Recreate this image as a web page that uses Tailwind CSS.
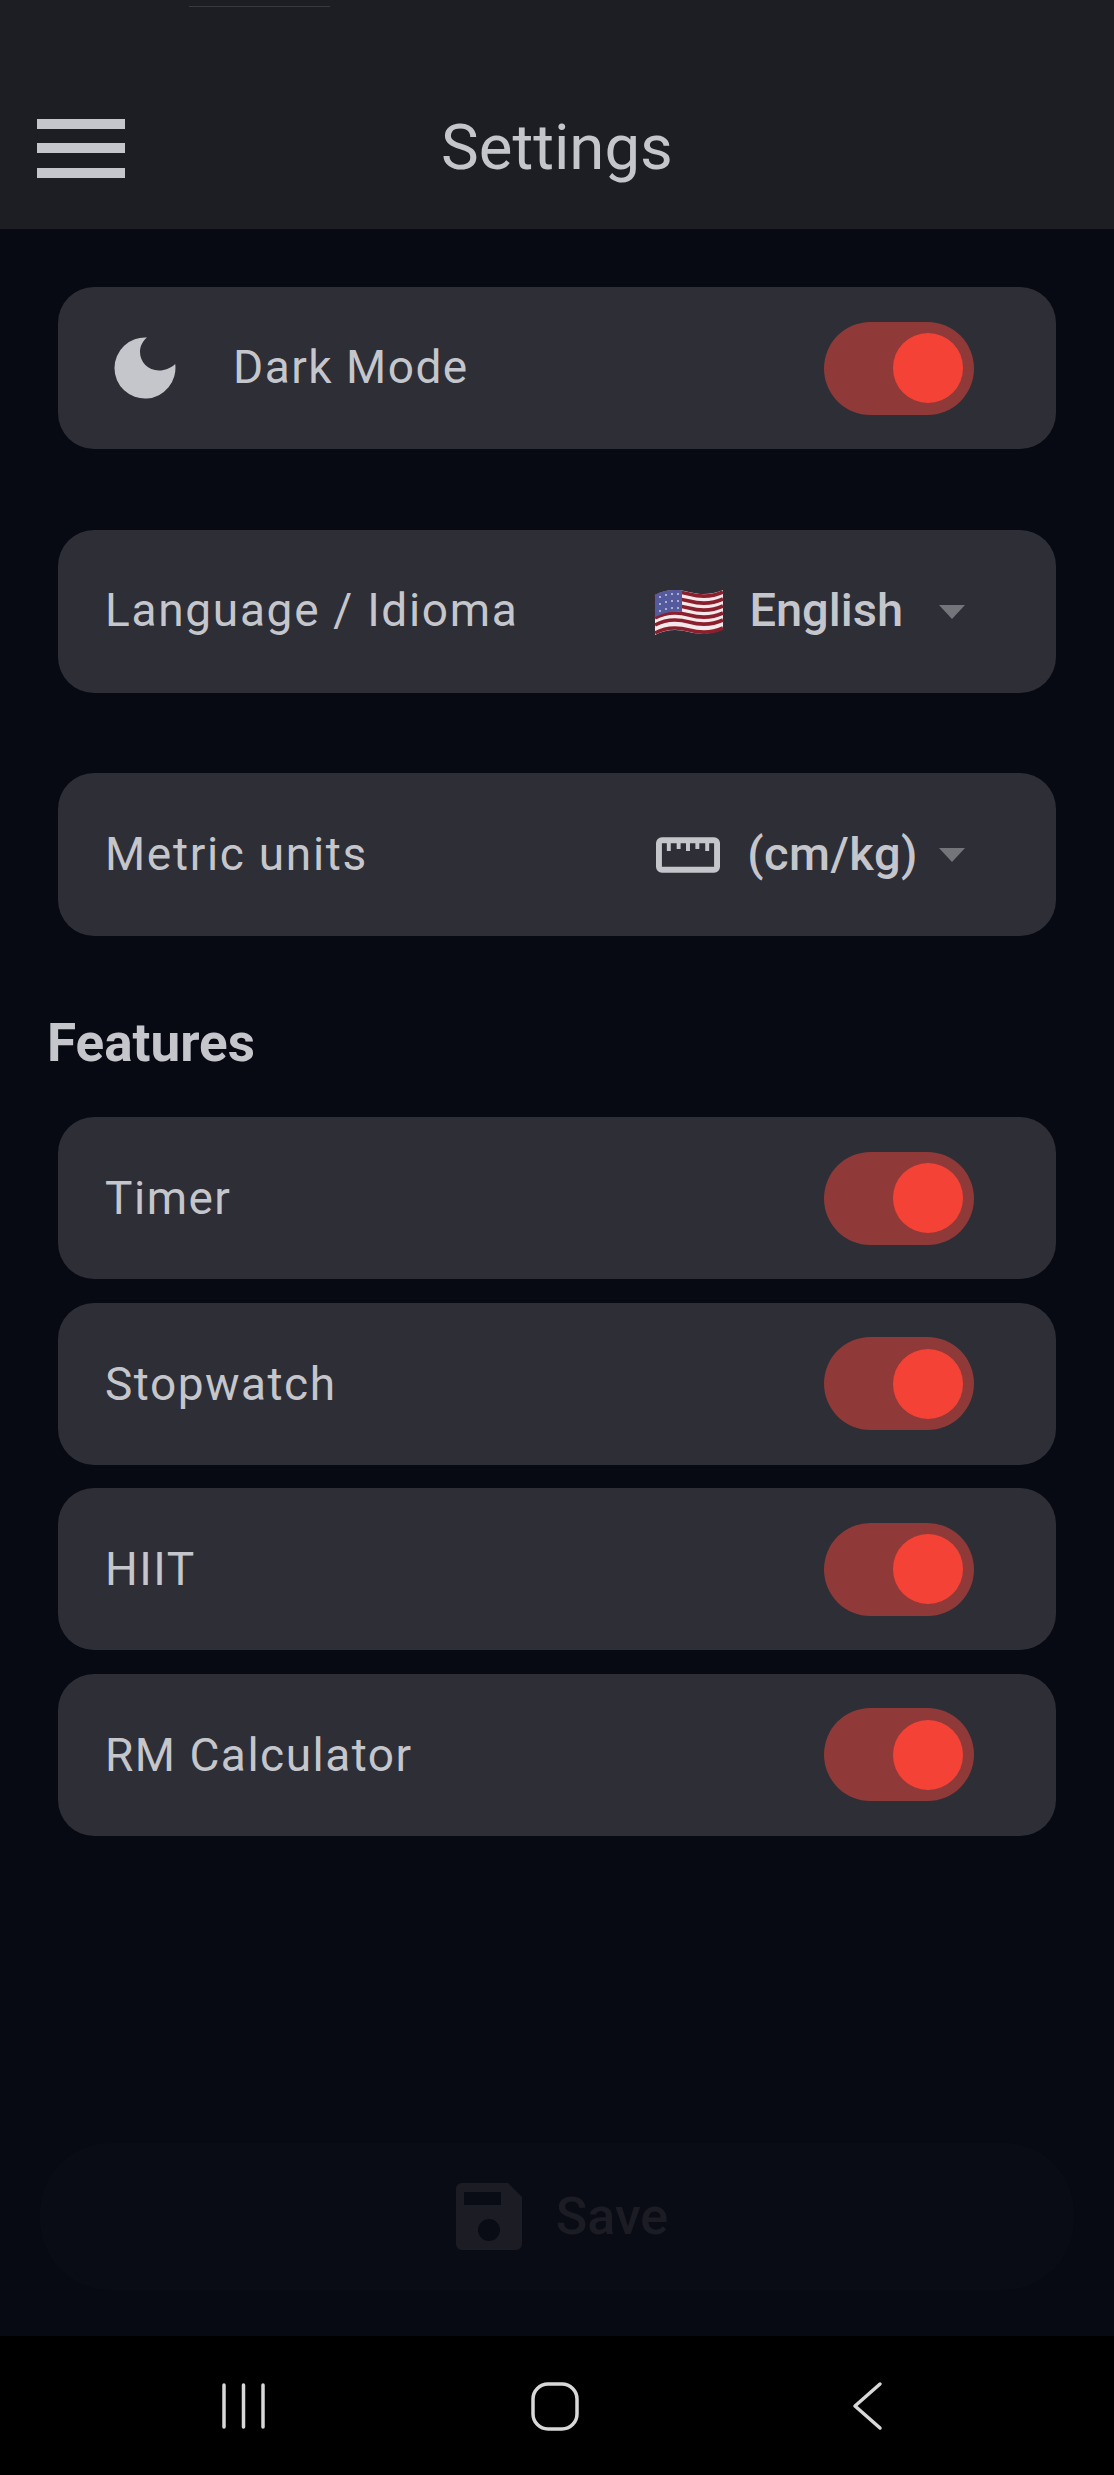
<!DOCTYPE html>
<html lang="en">
<head>
    <meta charset="UTF-8">
    <meta name="viewport" content="width=device-width, initial-scale=1.0">
    <title>Settings</title>
    <script src="https://cdn.jsdelivr.net/npm/@tailwindcss/browser@4"></script>
</head>
<body class="bg-[#070913] font-['Roboto',sans-serif] text-[#c5c6cc]">
<div class="w-[1114px] h-[2475px] flex flex-col overflow-hidden">
    <!-- App bar -->
    <header class="h-[229px] shrink-0 bg-[#1d1e23] relative flex flex-col">
        <div class="absolute left-[189px] top-[6px] w-[141px] h-px bg-[#3a3b40]"></div>
        <div class="flex items-center mt-[118px] pl-[37px]">
            <div class="w-[88px] flex flex-col gap-[14.5px]">
                <div class="h-[10px] bg-[#c5c6cc]"></div>
                <div class="h-[10px] bg-[#c5c6cc]"></div>
                <div class="h-[10px] bg-[#c5c6cc]"></div>
            </div>
            <h1 class="ml-[316px] text-[63.5px] leading-[60px] font-normal">Settings</h1>
        </div>
    </header>

    <main class="flex-1 flex flex-col px-[58px] pt-[58px]">
        <!-- Dark mode -->
        <div class="h-[162px] shrink-0 rounded-[36px] bg-[#2d2e36] flex items-center justify-between pl-[56px] pr-[82px]">
            <div class="flex items-center gap-[57px]">
                <svg class="w-[62px] h-[62px]" viewBox="0 0 62 62"><path fill="#c5c6cc" d="M33 0.600A30.500 30.500 0 1 0 61.200 27C57 31 51 33.500 45 33.500C34 33.500 26 25 26 15C26 9 29 4 33 0.600Z"/></svg>
                <span class="text-[46px] leading-[52px] tracking-[1.5px] mb-[3px]">Dark Mode</span>
            </div>
            <div class="w-[150px] h-[93px] rounded-full bg-[#8f3a38] flex items-center justify-end pr-[11px]">
                <div class="w-[70px] h-[70px] rounded-full bg-[#f44336]"></div>
            </div>
        </div>

        <!-- Language -->
        <div class="h-[163px] shrink-0 mt-[81px] rounded-[36px] bg-[#2d2e36] flex items-center justify-between pl-[47px] pr-[91px]">
            <span class="text-[46px] leading-[52px] tracking-[1.7px] mb-[3px]">Language / Idioma</span>
            <div class="flex items-center">
                <svg class="w-[70px] h-[50px]" viewBox="0 0 70 50">
                    <path fill="#f4e9ea" d="M1 8C12 2 24 2 35 5S58 8 69 3V42C58 47 46 48 35 45S12 42 1 48Z"/>
                    <g fill="none" stroke="#8c1f2e" stroke-width="3.6">
                        <path d="M1 10C12 4 24 4 35 7S58 10 69 5"/>
                        <path d="M1 17C12 11 24 11 35 14S58 17 69 12"/>
                        <path d="M1 24C12 18 24 18 35 21S58 24 69 19"/>
                        <path d="M1 31C12 25 24 25 35 28S58 31 69 26"/>
                        <path d="M1 38C12 32 24 32 35 35S58 38 69 33"/>
                        <path d="M1 46C12 40 24 40 35 43S58 46 69 41"/>
                    </g>
                    <path fill="#545a9c" d="M1 8C10 3 19 2.500 28 3.500V25C19 24 10 25 1 30Z"/>
                    <g fill="#c9cbe6">
                        <circle cx="6" cy="10" r="1"/><circle cx="12" cy="8" r="1"/><circle cx="18" cy="7" r="1"/><circle cx="24" cy="7" r="1"/>
                        <circle cx="6" cy="17" r="1"/><circle cx="12" cy="15" r="1"/><circle cx="18" cy="14" r="1"/><circle cx="24" cy="14" r="1"/>
                        <circle cx="6" cy="24" r="1"/><circle cx="12" cy="22" r="1"/><circle cx="18" cy="21" r="1"/><circle cx="24" cy="21" r="1"/>
                    </g>
                </svg>
                <span class="ml-[25px] text-[47px] leading-[52px] font-medium mb-[3px]">English</span>
                <div class="ml-[36px] w-0 h-0 border-x-[13.5px] border-x-transparent border-t-[14px] border-t-[#74757b]"></div>
            </div>
        </div>

        <!-- Units -->
        <div class="h-[163px] shrink-0 mt-[80px] rounded-[36px] bg-[#2d2e36] flex items-center justify-between pl-[47px] pr-[91px]">
            <span class="text-[46px] leading-[52px] tracking-[1.7px] mb-[2px]">Metric units</span>
            <div class="flex items-center">
                <svg class="w-[64px] h-[36px]" viewBox="0 0 65 36" fill="none" stroke="#c5c6cc">
                    <rect x="3" y="3" width="59" height="30" rx="3" stroke-width="6"/>
                    <path stroke-width="4" d="M13 5V14M23 5V12M32.500 5V14M42 5V12M52 5V14"/>
                </svg>
                <span class="ml-[27px] text-[47px] leading-[52px] font-medium tracking-[0.5px] mb-[2px]">(cm/kg)</span>
                <div class="ml-[21px] w-0 h-0 border-x-[13.5px] border-x-transparent border-t-[14px] border-t-[#74757b]"></div>
            </div>
        </div>

        <h2 class="-ml-[11px] mt-[79px] text-[53px] leading-[56px] font-bold">Features</h2>

        <!-- Feature toggles -->
        <div class="mt-[46px] flex flex-col gap-[23.500px]">
            <div class="h-[162px] rounded-[36px] bg-[#2d2e36] flex items-center justify-between pl-[47px] pr-[82px]">
                <span class="text-[46px] leading-[52px] tracking-[1.5px]">Timer</span>
                <div class="w-[150px] h-[93px] rounded-full bg-[#8f3a38] flex items-center justify-end pr-[11px]">
                    <div class="w-[70px] h-[70px] rounded-full bg-[#f44336]"></div>
                </div>
            </div>
            <div class="h-[162px] rounded-[36px] bg-[#2d2e36] flex items-center justify-between pl-[47px] pr-[82px]">
                <span class="text-[46px] leading-[52px] tracking-[1.5px]">Stopwatch</span>
                <div class="w-[150px] h-[93px] rounded-full bg-[#8f3a38] flex items-center justify-end pr-[11px]">
                    <div class="w-[70px] h-[70px] rounded-full bg-[#f44336]"></div>
                </div>
            </div>
            <div class="h-[162px] rounded-[36px] bg-[#2d2e36] flex items-center justify-between pl-[47px] pr-[82px]">
                <span class="text-[46px] leading-[52px] tracking-[1.5px]">HIIT</span>
                <div class="w-[150px] h-[93px] rounded-full bg-[#8f3a38] flex items-center justify-end pr-[11px]">
                    <div class="w-[70px] h-[70px] rounded-full bg-[#f44336]"></div>
                </div>
            </div>
            <div class="h-[162px] rounded-[36px] bg-[#2d2e36] flex items-center justify-between pl-[47px] pr-[82px]">
                <span class="text-[46px] leading-[52px] tracking-[1.5px]">RM Calculator</span>
                <div class="w-[150px] h-[93px] rounded-full bg-[#8f3a38] flex items-center justify-end pr-[11px]">
                    <div class="w-[70px] h-[70px] rounded-full bg-[#f44336]"></div>
                </div>
            </div>
        </div>

        <!-- Save button -->
        <div class="mt-auto mb-[46px] -mx-[18px] h-[147px] shrink-0 rounded-[70px] bg-[#0a0c15] flex items-center justify-center gap-[34px] pl-[10px]">
            <svg class="w-[66px] h-[67px]" viewBox="0 0 66 67"><path fill="#1c1d24" fill-rule="evenodd" d="M6 0H52L66 14V61A6 6 0 0 1 60 67H6A6 6 0 0 1 0 61V6A6 6 0 0 1 6 0ZM8 9V22H45V9ZM33 36A11 11 0 1 0 33 58A11 11 0 1 0 33 36Z"/></svg>
            <span class="text-[52px] leading-[56px] font-medium text-[#1c1d24]">Save</span>
        </div>
    </main>

    <!-- Android nav bar -->
    <nav class="h-[139px] shrink-0 bg-black relative">
        <svg class="absolute left-0 top-0 w-[1114px] h-[139px]" viewBox="0 0 1114 139" fill="none" stroke="#d8d8d8" stroke-width="3.5" stroke-linecap="round" stroke-linejoin="round">
            <path d="M224 49V91M243.500 49V91M263 49V91"/>
            <rect x="533" y="48" width="44" height="45" rx="15"/>
            <path d="M880 48L855 70L880 92"/>
        </svg>
    </nav>
</div>
</body>
</html>
